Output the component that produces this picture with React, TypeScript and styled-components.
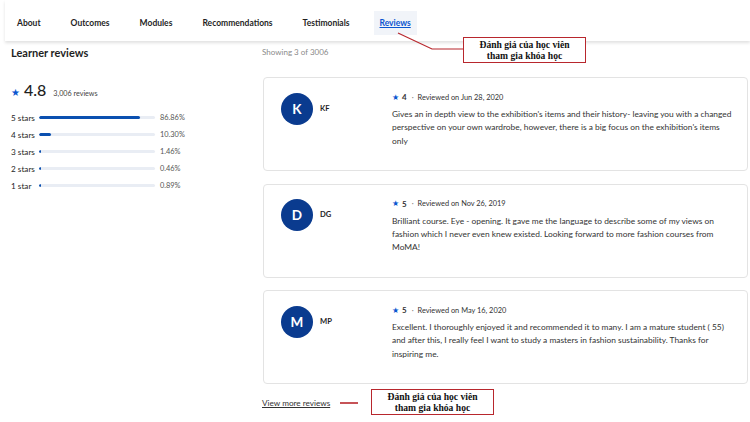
import React from "react";
import styled, { createGlobalStyle } from "styled-components";

const GlobalStyle = createGlobalStyle`
  html, body { margin: 0; padding: 0; background: #fff; }
  body { font-family: Lato, "Noto Sans", sans-serif; color: #1f1f1f; }
  * { box-sizing: border-box; }
`;

const Page = styled.div`
  position: relative;
  width: 750px;
  height: 422px;
  overflow: hidden;
  background: #fff;
`;

const Nav = styled.nav`
  display: flex;
  align-items: center;
  height: 41px;
  margin-left: 5px;
  padding-left: 6px;
  gap: 18px;
  box-shadow: 0 2px 3px rgba(0, 0, 0, 0.12);
`;

const Tab = styled.a<{ $active?: boolean }>`
  display: flex;
  align-items: center;
  height: 24px;
  margin-top: 4px;
  padding: 0 6px;
  font-size: 8.5px;
  font-weight: 700;
  color: ${(p) => (p.$active ? "#0a56d0" : "#1f1f1f")};
  text-decoration: ${(p) => (p.$active ? "underline" : "none")};
  background: ${(p) => (p.$active ? "#f1f4f9" : "transparent")};
`;

const Body = styled.div`
  display: grid;
  grid-template-columns: 251px 486px;
  padding-left: 11px;
`;

const Side = styled.aside`
  padding-top: 5px;
`;

const SideTitle = styled.h2`
  margin: 0;
  font-size: 11px;
  font-weight: 700;
  line-height: 14px;
`;

const Overall = styled.div`
  display: flex;
  align-items: baseline;
  gap: 4px;
  margin-top: 20px;
  height: 20px;
`;

const BigStar = styled.span`
  color: #0a56d0;
  font-size: 10px;
`;

const BigRating = styled.span`
  font-size: 16px;
  font-weight: 500;
  margin-right: 3px;
`;

const Small = styled.span`
  font-size: 7.2px;
  color: #444;
`;

const Rows = styled.div`
  display: flex;
  flex-direction: column;
  gap: 5.6px;
  margin-top: 12px;
`;

const Row = styled.div`
  display: flex;
  align-items: center;
  height: 11.4px;
`;

const RowLabel = styled.span`
  width: 28px;
  font-size: 8.2px;
  color: #1f1f1f;
`;

const Track = styled.div`
  width: 116px;
  height: 3px;
  border-radius: 2px;
  background: #e9edf4;
  overflow: hidden;
`;

const Fill = styled.div`
  height: 100%;
  background: #0b50b0;
  border-radius: 2px;
  min-width: 2px;
`;

const Pct = styled.span`
  margin-left: 5px;
  font-size: 7.4px;
  color: #555;
`;

const Main = styled.main`
  padding-top: 5px;
`;

const Showing = styled.div`
  font-size: 8px;
  color: #8a8a8a;
  line-height: 12px;
  margin-bottom: 19px;
`;

const Cards = styled.div`
  display: flex;
  flex-direction: column;
  gap: 12.5px;
  margin-left: 1px;
`;

const Card = styled.div`
  display: flex;
  height: 94px;
  border: 1px solid #e3e3e3;
  border-radius: 4px;
  padding: 13px 10px 0 17px;
`;

const Reviewer = styled.div`
  display: flex;
  align-items: center;
  gap: 7px;
  width: 111px;
  height: 33px;
  margin-top: 1px;
`;

const Avatar = styled.div`
  width: 32px;
  height: 32px;
  border-radius: 50%;
  background: #0a3b8f;
  color: #fff;
  font-size: 13.5px;
  font-weight: 700;
  display: flex;
  align-items: center;
  justify-content: center;
`;

const Name = styled.span`
  font-size: 7.6px;
  font-weight: 700;
  margin-top: -2px;
`;

const Content = styled.div`
  flex: 1;
`;

const Meta = styled.div`
  display: flex;
  align-items: center;
  gap: 3px;
  height: 12px;
  font-size: 7.4px;
  color: #333;
`;

const MetaStar = styled.span`
  color: #0a56d0;
  font-size: 7.5px;
`;

const MetaScore = styled.span`
  font-weight: 700;
  font-size: 8px;
  margin-right: 1px;
`;

const Dot = styled.span`
  color: #777;
  margin: 0 1px;
`;

const Text = styled.p`
  margin: 5px 0 0;
  font-size: 8.4px;
  line-height: 13.4px;
  color: #333;
`;

const More = styled.a`
  display: inline-block;
  margin-top: 14px;
  font-size: 8.2px;
  color: #333;
  text-decoration: underline;
`;

const Note = styled.div`
  position: absolute;
  width: 123px;
  height: 26px;
  border: 1.5px solid #b8272d;
  background: #fff;
  font-family: "Liberation Serif", "Times New Roman", serif;
  font-weight: 700;
  font-size: 9.6px;
  line-height: 11px;
  text-align: center;
  color: #111;
  padding-top: 1px;
`;

const Pointer = styled.svg`
  position: absolute;
  left: 0;
  top: 0;
  pointer-events: none;
`;

const tabs = ["About", "Outcomes", "Modules", "Recommendations", "Testimonials", "Reviews"];

const breakdown = [
  { label: "5 stars", pct: 86.86 },
  { label: "4 stars", pct: 10.3 },
  { label: "3 stars", pct: 1.46 },
  { label: "2 stars", pct: 0.46 },
  { label: "1 star", pct: 0.89 },
];

const reviews = [
  {
    initial: "K",
    name: "KF",
    score: 4,
    date: "Jun 28, 2020",
    text: "Gives an in depth view to the exhibition's items and their history- leaving you with a changed perspective on your own wardrobe, however, there is a big focus on the exhibition's items only",
  },
  {
    initial: "D",
    name: "DG",
    score: 5,
    date: "Nov 26, 2019",
    text: "Brilliant course. Eye - opening. It gave me the language to describe some of my views on fashion which I never even knew existed. Looking forward to more fashion courses from MoMA!",
  },
  {
    initial: "M",
    name: "MP",
    score: 5,
    date: "May 16, 2020",
    text: "Excellent. I thoroughly enjoyed it and recommended it to many. I am a mature student ( 55) and after this, I really feel I want to study a masters in fashion sustainability. Thanks for inspiring me.",
  },
];

export default function App() {
  return (
    <Page>
      <GlobalStyle />
      <Nav>
        {tabs.map((t) => (
          <Tab key={t} $active={t === "Reviews"}>
            {t}
          </Tab>
        ))}
      </Nav>
      <Body>
        <Side>
          <SideTitle>Learner reviews</SideTitle>
          <Overall>
            <BigStar>★</BigStar>
            <BigRating>4.8</BigRating>
            <Small>3,006 reviews</Small>
          </Overall>
          <Rows>
            {breakdown.map((r) => (
              <Row key={r.label}>
                <RowLabel>{r.label}</RowLabel>
                <Track>
                  <Fill style={{ width: `${r.pct}%` }} />
                </Track>
                <Pct>{r.pct.toFixed(2)}%</Pct>
              </Row>
            ))}
          </Rows>
        </Side>
        <Main>
          <Showing>Showing 3 of 3006</Showing>
          <Cards>
            {reviews.map((r) => (
              <Card key={r.name}>
                <Reviewer>
                  <Avatar>{r.initial}</Avatar>
                  <Name>{r.name}</Name>
                </Reviewer>
                <Content>
                  <Meta>
                    <MetaStar>★</MetaStar>
                    <MetaScore>{r.score}</MetaScore>
                    <Dot>·</Dot>
                    <span>Reviewed on {r.date}</span>
                  </Meta>
                  <Text>{r.text}</Text>
                </Content>
              </Card>
            ))}
          </Cards>
          <More>View more reviews</More>
        </Main>
      </Body>
      <Pointer width="750" height="422" viewBox="0 0 750 422">
        <polyline points="398,33 432,49 463,49" fill="none" stroke="#b8272d" strokeWidth="1.2" />
        <line x1="340" y1="403" x2="358" y2="403" stroke="#b8272d" strokeWidth="1.6" />
      </Pointer>
      <Note style={{ left: 463, top: 37 }}>
        Đánh giá của học viên
        <br />
        tham gia khóa học
      </Note>
      <Note style={{ left: 371, top: 389 }}>
        Đánh giá của học viên
        <br />
        tham gia khóa học
      </Note>
    </Page>
  );
}
